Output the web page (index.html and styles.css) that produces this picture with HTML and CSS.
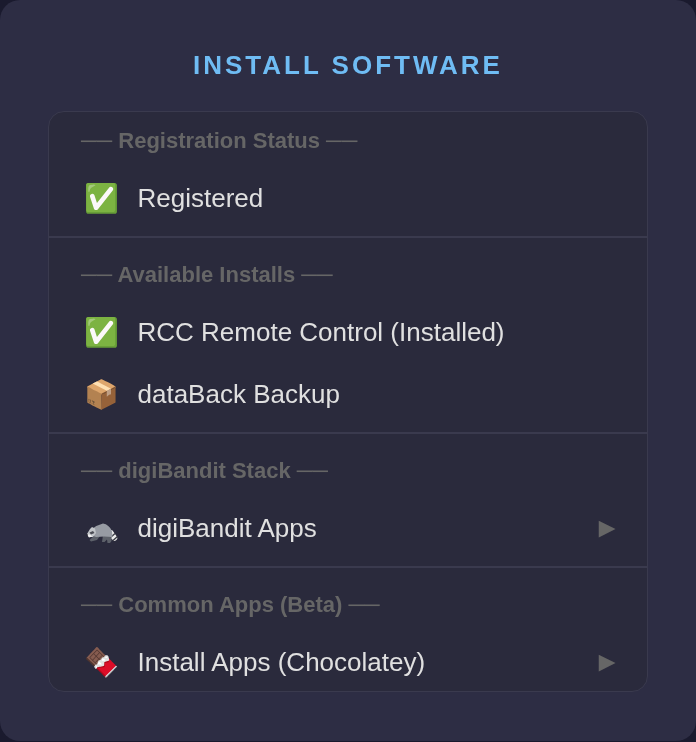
FILE: index.html
```html
<!DOCTYPE html>
<html lang="en">
<head>
  <meta charset="UTF-8" />
  <meta name="viewport" content="width=device-width, initial-scale=1.0" />
  <title>Install Software</title>
  <link rel="stylesheet" href="styles.css">
</head>
<body>

  <div class="panel">
    <h1>INSTALL SOFTWARE</h1>

    <div class="menu">
      <section class="menu-group">
        <div class="group-label">── Registration Status ──</div>
        <div class="menu-item"><span class="item-icon">✅</span><span class="item-name">Registered</span></div>
      </section>

      <section class="menu-group">
        <div class="group-label">── Available Installs ──</div>
        <div class="menu-item"><span class="item-icon">✅</span><span class="item-name">RCC Remote Control (Installed)</span></div>
        <div class="menu-item"><span class="item-icon">📦</span><span class="item-name">dataBack Backup</span></div>
      </section>

      <section class="menu-group">
        <div class="group-label">── digiBandit Stack ──</div>
        <div class="menu-item">
          <span class="item-icon">
            <!-- raccoon, side view -->
            <svg class="raccoon" viewBox="84 513 34 30" width="34" height="30">
              <path fill="#5d616a" d="M103 535L112 535L111.5 541L110 543L107.5 543L107 539.5L104.5 542L102 542Z"/>
              <path fill="#5d616a" d="M95 535L100 536L97 540L91 541.5L89.5 540Z"/>
              <path fill="none" stroke="#ececec" stroke-width="5.5" stroke-linecap="round" d="M111 533L114.5 538"/>
              <path fill="none" stroke="#3a3c44" stroke-width="1.4" d="M110.5 537.5L115 533.5M113 540.5L117.5 536.5"/>
              <path fill="#979ba3" d="M92 529Q97 525 103 523.5Q109 524.5 112 531L112.5 537L104 536.5L96 537L91 535Z"/>
              <path fill="#c2c5c9" d="M87 534L90 529L92 527L95 528.5L96 533L93 537L89 537Z"/>
              <path fill="#4a4c54" d="M89.5 532.5L93 531L94.5 533L91 534.5Z"/>
              <path fill="#f4f4f4" d="M87 534.5L90 534.5L92.5 536.5L89 537.5Z"/>
              <circle fill="#26262c" cx="87.3" cy="535" r="0.7"/>
            </svg>
          </span>
          <span class="item-name">digiBandit Apps</span><span class="item-arrow">►</span>
        </div>
      </section>

      <section class="menu-group">
        <div class="group-label">── Common Apps (Beta) ──</div>
        <div class="menu-item"><span class="item-icon">🍫</span><span class="item-name">Install Apps (Chocolatey)</span><span class="item-arrow">►</span></div>
      </section>
    </div>
  </div>

</body>
</html>
```

FILE: styles.css
```css
body {
  margin: 0;
  background-color: #1a1a2e;
  font-family: "Liberation Sans", Arial, sans-serif;
}

.panel {
  box-sizing: border-box;
  height: 741px;
  padding: 48px;
  background-color: #2d2d44;
  border-radius: 20px;
  will-change: transform;
}

h1 {
  margin: 0 0 28px;
  text-align: center;
  font-size: 26px;
  line-height: 35px;
  font-weight: bold;
  letter-spacing: 3px;
  color: #6fbcf4;
}

.menu {
  height: 581px;
  box-sizing: border-box;
  overflow: hidden;
  background-color: #2a2a3c;
  border: 1px solid #3a3a4e;
  border-radius: 16px;
}

.menu-group {
  padding: 24px 0 7px;
  border-bottom: 2px solid #3a3a4e;
}

.menu-group:first-child {
  padding-top: 16px;
}

.menu-group:last-child {
  padding-bottom: 0;
  border-bottom: none;
}

.group-label {
  margin-bottom: 13px;
  padding: 0 32px;
  font-size: 22px;
  line-height: 26px;
  font-weight: bold;
  color: #666;
}

.menu-item {
  display: flex;
  align-items: center;
  height: 62px;
  padding: 0 26px 0 32px;
  font-size: 26px;
  color: #e0e0e0;
}

.item-icon {
  display: flex;
  justify-content: center;
  width: 40px;
  margin-right: 16.5px;
  font-size: 28px;
}

.raccoon {
  flex: none;
}

.item-name {
  flex: 1;
}

.item-arrow {
  font-size: 28px;
  color: #666;
}
```
